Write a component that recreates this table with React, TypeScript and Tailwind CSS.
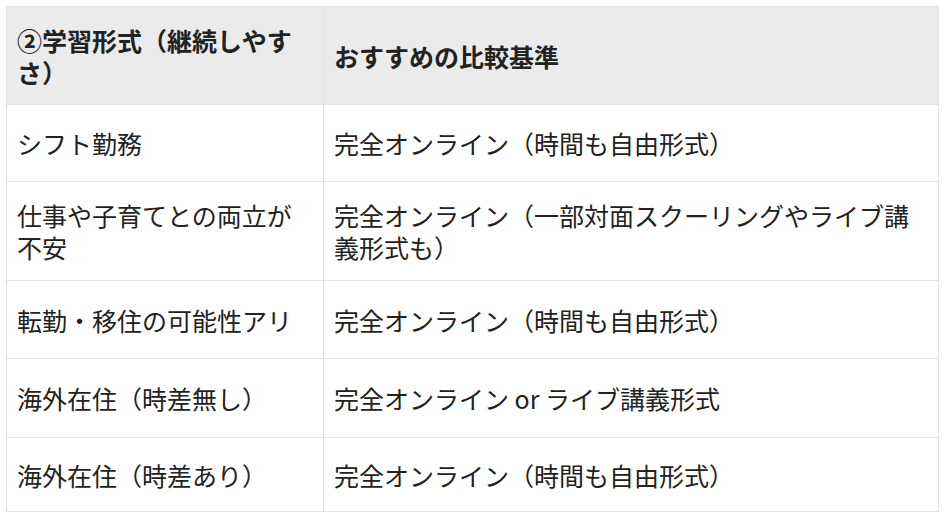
const ROWS: { label: string; value: string; h: string }[] = [
  { label: 'シフト勤務', value: '完全オンライン（時間も自由形式）', h: 'h-[77px]' },
  { label: '仕事や子育てとの両立が不安', value: '完全オンライン（一部対面スクーリングやライブ講義形式も）', h: 'h-[99px]' },
  { label: '転勤・移住の可能性アリ', value: '完全オンライン（時間も自由形式）', h: 'h-[78px]' },
  { label: '海外在住（時差無し）', value: '完全オンライン or ライブ講義形式', h: 'h-[79px]' },
  { label: '海外在住（時差あり）', value: '完全オンライン（時間も自由形式）', h: 'h-[74px]' },
];

export default function App() {
  return (
    <div className="min-h-screen bg-white p-[6px] font-['Noto_Sans_CJK_JP','Noto_Sans',sans-serif] text-[25px] leading-[32px] text-[#222]">
      <table className="w-[933px] table-fixed border-collapse">
        <colgroup>
          <col className="w-[317px]" />
          <col />
        </colgroup>
        <thead>
          <tr className="h-[98px] bg-[#ebebeb]">
            <th className="border border-[#e2e2e2] px-[10px] text-left align-middle font-bold">
              ②学習形式（継続しやすさ）
            </th>
            <th className="border border-[#e2e2e2] px-[10px] text-left align-middle font-bold">
              おすすめの比較基準
            </th>
          </tr>
        </thead>
        <tbody>
          {ROWS.map((r) => (
            <tr key={r.label} className={r.h}>
              <td className="border border-[#e2e2e2] px-[10px] align-middle">{r.label}</td>
              <td className="border border-[#e2e2e2] px-[10px] align-middle">{r.value}</td>
            </tr>
          ))}
        </tbody>
      </table>
    </div>
  );
}
